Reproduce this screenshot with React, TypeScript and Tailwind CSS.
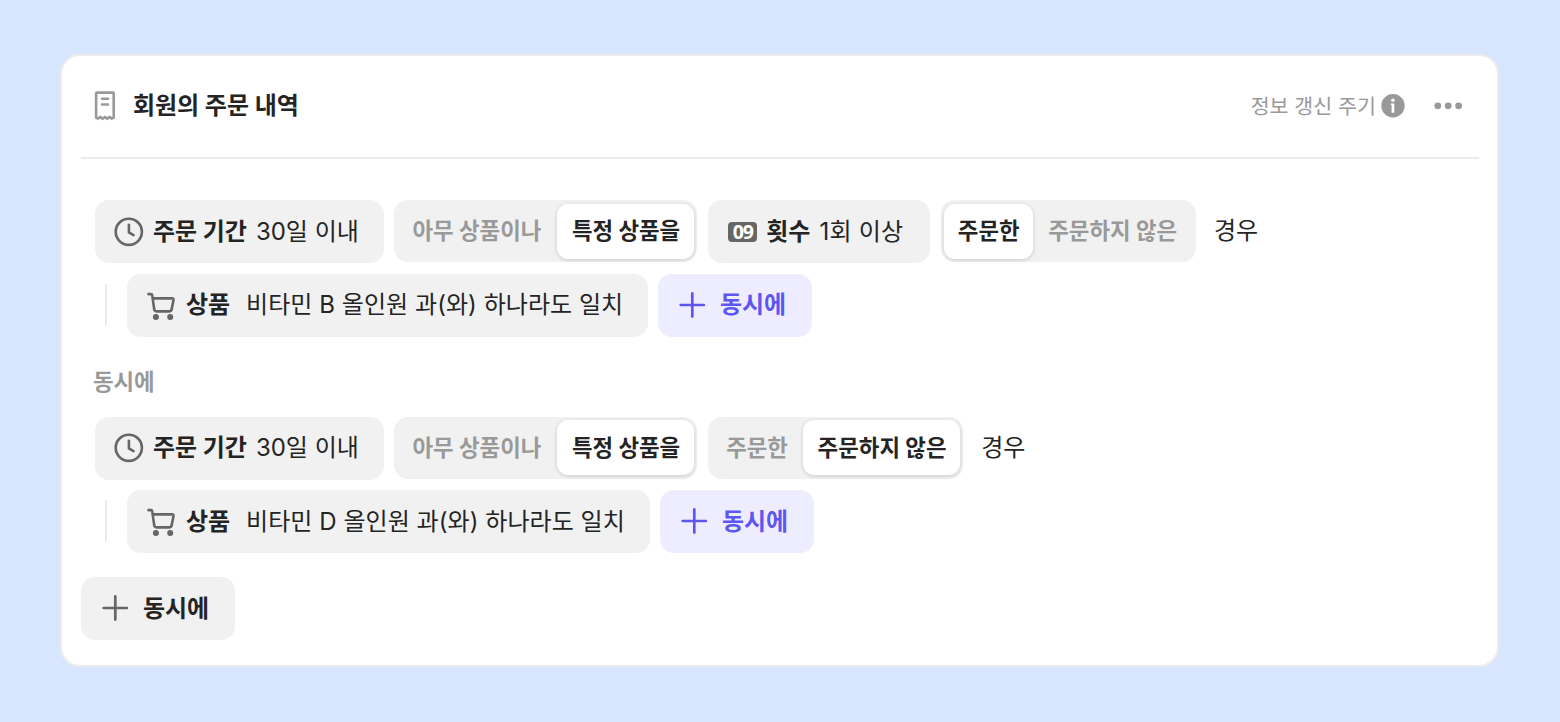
import clsx from "clsx";
import type { ReactNode } from "react";

function ReceiptIcon() {
  return (
    <svg width="24" height="32" viewBox="0 0 24 32" fill="none" stroke="#999" strokeWidth="2.6">
      <path
        d="M3.1 27.6V3.4Q3.1 2.6 3.9 2.6H19.9Q20.7 2.6 20.7 3.4V27.6L18.8 28.6L16.4 26.9L14.2 28.8L11.9 26.9L9.6 28.8L7.4 26.9L5 28.6Z"
        strokeLinejoin="round"
      />
      <path d="M9 8.8H15M9 14.5H15" strokeLinecap="round" />
    </svg>
  );
}

function ClockIcon() {
  return (
    <svg width="32" height="32" viewBox="0 0 32 32" fill="none" stroke="#666" strokeWidth="2.6">
      <circle cx="15.8" cy="15.8" r="13.1" />
      <path d="M15.9 8.7V16.4L20.5 19.1" strokeLinecap="round" strokeLinejoin="round" />
    </svg>
  );
}

function CartIcon() {
  return (
    <svg width="32" height="32" viewBox="0 0 32 32" fill="none" stroke="#666" strokeWidth="2.6">
      <path
        d="M3.4 5.1H6Q7 5.1 7.2 6.1L9.2 20.1Q9.6 22.4 11.8 22.4H23.9Q26.2 22.4 26.7 20.1L28.5 10.9Q28.7 9.4 27.3 9.4H7.8"
        strokeLinecap="round"
        strokeLinejoin="round"
      />
      <circle cx="10.9" cy="27.9" r="3" fill="#666" stroke="none" />
      <circle cx="25.2" cy="27.9" r="3" fill="#666" stroke="none" />
    </svg>
  );
}

function PlusIcon() {
  return (
    <svg width="28" height="28" viewBox="0 0 28 28" fill="none" stroke="currentColor" strokeWidth="2.7">
      <path d="M14.3 2.4V25.6M2.7 14H25.9" strokeLinecap="round" />
    </svg>
  );
}

function CountIcon() {
  return (
    <span className="flex h-5 w-[29px] items-center justify-center rounded bg-[#666] font-['Open_Sans'] text-[19.5px] leading-5 font-bold tracking-[-1px] text-white">
      09
    </span>
  );
}

function InfoIcon() {
  return (
    <svg width="24" height="24" viewBox="0 0 24 24">
      <circle cx="12" cy="11.7" r="11.7" fill="#999" />
      <circle cx="11.9" cy="6.3" r="1.8" fill="#fff" />
      <path d="M9.9 9.4H13.3V18.7H10.6V11H9.9Z" fill="#fff" />
    </svg>
  );
}

function MoreIcon() {
  return (
    <svg width="30" height="8" viewBox="0 0 30 8" fill="#999">
      <circle cx="4.8" cy="3.8" r="3.4" />
      <circle cx="15.2" cy="3.8" r="3.4" />
      <circle cx="25.6" cy="3.8" r="3.4" />
    </svg>
  );
}

function Chip({ icon, label, value, className }: { icon: ReactNode; label: string; value: string; className: string }) {
  return (
    <div className={clsx("flex h-[63px] items-center rounded-[14px] bg-[#f1f1f1] text-2xl whitespace-pre", className)}>
      {icon}
      <span className="font-bold">{label}</span>
      <span>{value}</span>
    </div>
  );
}

type Option = { text: string; width: string; active?: boolean };

function Segment({ options, className }: { options: Option[]; className: string }) {
  return (
    <div className={clsx("flex h-[62px] items-center rounded-[14px] bg-[#f1f1f1] px-[3px]", className)}>
      {options.map((option) => (
        <button
          key={option.text}
          className={clsx(
            "h-[55px] rounded-[11px] pb-px text-center text-[22.4px] font-bold whitespace-nowrap",
            option.width,
            option.active ? "bg-white pl-px shadow-[0_1px_4px_rgba(0,0,0,0.16)]" : "text-[#999]",
          )}
        >
          {option.text}
        </button>
      ))}
    </div>
  );
}

function AddButton({ className }: { className: string }) {
  return (
    <button className={clsx("flex h-[63px] w-[154px] items-center gap-3.5 rounded-[14px] pl-5 text-2xl font-bold [&>svg]:-mt-px", className)}>
      <PlusIcon />
      <span>동시에</span>
    </button>
  );
}

function ProductRow({ value, width }: { value: string; width: string }) {
  return (
    <div className="mt-[10.5px] flex items-center pl-[10px]">
      <div className="mr-5 -mt-px h-[42px] w-0.5 bg-[#ececec]" />
      <Chip
        icon={<CartIcon />}
        label="상품"
        value={value}
        className={clsx("pl-[18px] [&>span+span]:ml-4 [&>span+span]:tracking-[0.05px] [&>svg]:-mt-px [&>svg]:mr-[9px]", width)}
      />
      <AddButton className="ml-2.5 bg-[#eeedff] text-[#5e56f0]" />
    </div>
  );
}

const PERIOD_CLASS = "w-[289px] pl-[18px] [&>span+span]:ml-[9px] [&>svg]:mr-2";

const PRODUCT_OPTIONS: Option[] = [
  { text: "아무 상품이나", width: "w-[160px]" },
  { text: "특정 상품을", width: "w-[137.4px]", active: true },
];

export default function App() {
  return (
    <div className="h-[722px] w-[1560px] bg-[#d8e5ff] px-[60.4px] pt-[54px] font-['Inter','Noto_Sans_CJK_KR',sans-serif] text-[#242424]">
      <div className="h-[613px] w-[1439px] rounded-[20px] border-2 border-[#ececec] bg-white px-[18.5px]">
        <header className="flex h-[103px] items-center border-b-2 border-[#ececec] pr-4 pb-0.5 pl-3">
          <ReceiptIcon />
          <h1 className="ml-4 text-2xl font-bold">회원의 주문 내역</h1>
          <span className="mr-[5px] ml-auto pt-[3px] text-[20.6px] text-[#999]">정보 갱신 주기</span>
          <InfoIcon />
          <div className="ml-7">
            <MoreIcon />
          </div>
        </header>

        <div className="pt-[41.4px] pl-[14px]">
          <div className="flex items-start">
            <Chip icon={<ClockIcon />} label="주문 기간" value="30일 이내" className={PERIOD_CLASS} />
            <Segment options={PRODUCT_OPTIONS} className="ml-2.5 w-[303.4px]" />
            <Chip
              icon={<CountIcon />}
              label="횟수"
              value="1회 이상"
              className="ml-[11px] w-[221.6px] pl-5 [&>span:first-child]:mr-[9px] [&>span+span+span]:ml-[9px] [&>span+span+span]:tracking-[0.2px]"
            />
            <Segment
              options={[
                { text: "주문한", width: "w-[89px]", active: true },
                { text: "주문하지 않은", width: "w-[161px]" },
              ]}
              className="ml-[11px] w-[255px]"
            />
            <span className="ml-[18px] text-2xl leading-[62px]">경우</span>
          </div>
          <ProductRow value="비타민 B 올인원 과(와) 하나라도 일치" width="w-[521px]" />
        </div>

        <div className="mt-[29px] pl-3 text-[22.4px] leading-8 font-bold text-[#999]">동시에</div>

        <div className="mt-[19px] pl-[14px]">
          <div className="flex items-start">
            <Chip icon={<ClockIcon />} label="주문 기간" value="30일 이내" className={PERIOD_CLASS} />
            <Segment options={PRODUCT_OPTIONS} className="ml-2.5 w-[303.4px]" />
            <Segment
              options={[
                { text: "주문한", width: "w-[91.5px]" },
                { text: "주문하지 않은", width: "w-[157.5px]", active: true },
              ]}
              className="ml-[11px] w-[255px]"
            />
            <span className="ml-[18px] text-2xl leading-[62px]">경우</span>
          </div>
          <ProductRow value="비타민 D 올인원 과(와) 하나라도 일치" width="w-[523px]" />
        </div>

        <AddButton className="mt-6 bg-[#f1f1f1] [&_svg]:text-[#666]" />
      </div>
    </div>
  );
}
